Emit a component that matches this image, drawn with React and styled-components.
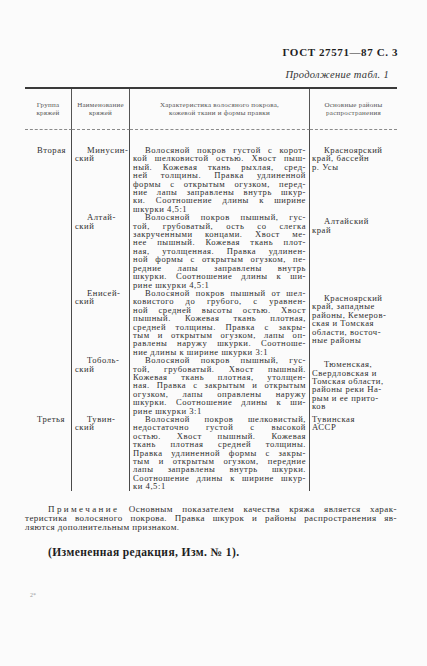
import React from "react";
import styled, { createGlobalStyle } from "styled-components";

const GlobalStyle = createGlobalStyle`
  html, body {
    margin: 0;
    padding: 0;
    background: #fbfbfb;
  }
  body {
    font-family: "Liberation Serif", "DejaVu Serif", serif;
    color: #2b2b2b;
  }
`;

const Page = styled.div`
  width: 427px;
  height: 666px;
  box-sizing: border-box;
  padding: 46px 29px 0 25px;
  background: #fbfbfb;
  overflow: hidden;
`;

const RunningHead = styled.div`
  text-align: right;
  font-weight: bold;
  font-size: 11px;
  line-height: 12px;
  letter-spacing: 0.6px;
  color: #1e1e1e;
`;

const Continued = styled.div`
  margin-top: 11px;
  padding-right: 9px;
  text-align: right;
  font-style: italic;
  font-size: 10.5px;
  line-height: 12px;
  letter-spacing: 0.3px;
  color: #333;
`;

const Table = styled.div`
  margin-top: 6px;
  width: 372px;
  display: grid;
  grid-template-columns: 47px 58px 180px 87px;
  border-top: 2px solid #3a3a3a;
`;

const HeadCell = styled.div`
  height: 40px;
  display: flex;
  align-items: center;
  justify-content: center;
  text-align: center;
  font-size: 7px;
  line-height: 8px;
  letter-spacing: 0.25px;
  color: #555;
  border-bottom: 1px dashed #8a8a8a;
  border-right: ${({ $last }) => ($last ? "none" : "1px solid #555")};
`;

const Cell = styled.div`
  box-sizing: border-box;
  padding: ${({ $top }) => $top}px ${({ $pr }) => $pr || 0}px 0 ${({ $pl }) => $pl}px;
  font-size: 8.6px;
  line-height: 8.4px;
  letter-spacing: 0.55px;
  color: #2e2e2e;
  border-right: ${({ $last }) => ($last ? "none" : "1px solid #4a4a4a")};
`;

const Line = styled.span`
  display: block;
  white-space: normal;
  text-align: ${({ $last }) => ($last ? "left" : "justify")};
  text-align-last: ${({ $last }) => ($last ? "left" : "justify")};
  padding-left: ${({ $indent }) => ($indent ? "12px" : "0")};
`;

const Note = styled.div`
  margin-top: 14px;
  width: 372px;
  font-size: 9px;
  line-height: 9px;
  letter-spacing: 0.45px;
  color: #2e2e2e;
`;

const NoteFirst = styled(Line)`
  padding-left: 23px;
`;

const Spaced = styled.span`
  letter-spacing: 2.4px;
`;

const Amendment = styled.div`
  margin-top: 14px;
  padding-left: 23px;
  font-weight: bold;
  font-size: 11.5px;
  line-height: 12px;
  letter-spacing: 0.4px;
  color: #1e1e1e;
`;

const PageMark = styled.div`
  margin-top: 34px;
  padding-left: 5px;
  font-size: 6px;
  line-height: 6px;
  color: #9a9a9a;
`;

const rows = [
  {
    group: "Вторая",
    name: ["Минусин-", "ский"],
    desc: [
      "Волосяной покров густой с корот-",
      "кой шелковистой остью. Хвост пыш-",
      "ный. Кожевая ткань рыхлая, сред-",
      "ней толщины. Правка удлиненной",
      "формы с открытым огузком, перед-",
      "ние лапы заправлены внутрь шкур-",
      "ки. Соотношение длины к ширине",
      "шкурки 4,5:1",
    ],
    area: ["Красноярский", "край, бассейн", "р. Усы"],
    areaShift: 0,
    indentArea: true,
  },
  {
    group: "",
    name: ["Алтай-", "ский"],
    desc: [
      "Волосяной покров пышный, гус-",
      "той, грубоватый, ость со слегка",
      "закрученными концами. Хвост ме-",
      "нее пышный. Кожевая ткань плот-",
      "ная, утолщенная. Правка удлинен-",
      "ной формы с открытым огузком, пе-",
      "редние лапы заправлены внутрь",
      "шкурки. Соотношение длины к ши-",
      "рине шкурки 4,5:1",
    ],
    area: ["Алтайский", "край"],
    areaShift: 4,
    indentArea: true,
  },
  {
    group: "",
    name: ["Енисей-", "ский"],
    desc: [
      "Волосяной покров пышный от шел-",
      "ковистого до грубого, с уравнен-",
      "ной средней высоты остью. Хвост",
      "пышный. Кожевая ткань плотная,",
      "средней толщины. Правка с закры-",
      "тым и открытым огузком, лапы оп-",
      "равлены наружу шкурки. Соотноше-",
      "ние длины к ширине шкурки 3:1",
    ],
    area: [
      "Красноярский",
      "край, западные",
      "районы, Кемеров-",
      "ская и Томская",
      "области, восточ-",
      "ные районы",
    ],
    areaShift: 5,
    indentArea: true,
  },
  {
    group: "",
    name: ["Тоболь-", "ский"],
    desc: [
      "Волосяной покров пышный, гус-",
      "той, грубоватый. Хвост пышный.",
      "Кожевая ткань плотная, утолщен-",
      "ная. Правка с закрытым и открытым",
      "огузком, лапы оправлены наружу",
      "шкурки. Соотношение длины к ши-",
      "рине шкурки 3:1",
    ],
    area: [
      "Тюменская,",
      "Свердловская и",
      "Томская области,",
      "районы реки На-",
      "рым и ее прито-",
      "ков",
    ],
    areaShift: 4,
    indentArea: true,
  },
  {
    group: "Третья",
    name: ["Тувин-", "ский"],
    desc: [
      "Волосяной покров шелковистый,",
      "недостаточно густой с высокой",
      "остью. Хвост пышный. Кожевая",
      "ткань плотная средней толщины.",
      "Правка удлиненной формы с закры-",
      "тым и открытым огузком, передние",
      "лапы заправлены внутрь шкурки.",
      "Соотношение длины к ширине шкур-",
      "ки 4,5:1",
    ],
    area: ["Тувинская", "АССР"],
    areaShift: 0,
    indentArea: false,
  },
];

const Lines = ({ items, indent = true, justify = true }) =>
  items.map((t, i) => (
    <Line
      key={i}
      $indent={indent && i === 0}
      $last={!justify || i === items.length - 1}
    >
      {t}
    </Line>
  ));

export default function App() {
  return (
    <>
      <GlobalStyle />
      <Page>
        <RunningHead>ГОСТ 27571—87 С. 3</RunningHead>
        <Continued>Продолжение табл. 1</Continued>
        <Table>
          <HeadCell>
            Группа
            <br />
            кряжей
          </HeadCell>
          <HeadCell>
            Наименование
            <br />
            кряжей
          </HeadCell>
          <HeadCell>
            Характеристика волосяного покрова,
            <br />
            кожевой ткани и формы правки
          </HeadCell>
          <HeadCell $last>
            Основные районы
            <br />
            распространения
          </HeadCell>

          {rows.map((r, idx) => {
            const top = idx === 0 ? 16 : 0;
            return (
              <React.Fragment key={idx}>
                <Cell $top={top} $pl={12}>
                  {r.group}
                </Cell>
                <Cell $top={top} $pl={3}>
                  <Lines items={r.name} justify={false} />
                </Cell>
                <Cell $top={top} $pl={3} $pr={3}>
                  <Lines items={r.desc} />
                </Cell>
                <Cell $top={top + r.areaShift} $pl={2} $pr={4} $last>
                  <Lines items={r.area} indent={r.indentArea} justify={false} />
                </Cell>
              </React.Fragment>
            );
          })}
        </Table>
        <Note>
          <NoteFirst>
            <Spaced>Примечание</Spaced> Основным показателем качества кряжа является харак-
          </NoteFirst>
          <Line>теристика волосяного покрова. Правка шкурок и районы распространения яв-</Line>
          <Line $last>ляются дополнительным признаком.</Line>
        </Note>
        <Amendment>(Измененная редакция, Изм. № 1).</Amendment>
        <PageMark>2*</PageMark>
      </Page>
    </>
  );
}
